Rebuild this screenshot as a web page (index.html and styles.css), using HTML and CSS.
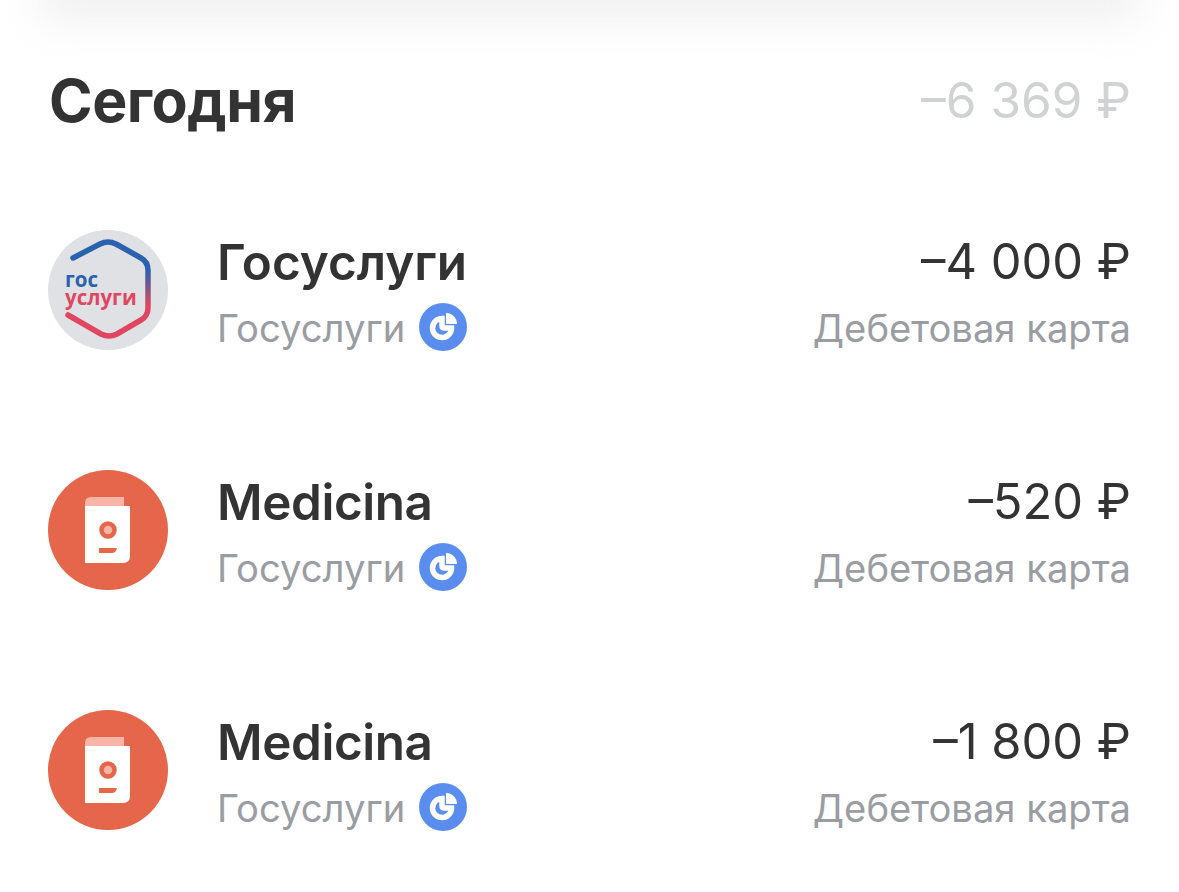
FILE: index.html
```html
<!DOCTYPE html>
<html lang="en">
<head>
    <meta charset="UTF-8">
    <title>Сегодня</title>
    <link rel="stylesheet" href="styles.css">
</head>
<body>
    <div class="shade"></div>
    <div class="day-header">
        <div class="day-title">Сегодня</div>
        <div class="day-total">–6 369 ₽</div>
    </div>
    <div class="list">
        <div class="row">
            <svg class="logo" viewBox="0 0 120 120">
                <defs>
                    <linearGradient id="hex" x1="0" y1="0" x2="0" y2="1">
                        <stop offset="0.3" stop-color="#2b62ad"/>
                        <stop offset="0.68" stop-color="#e0465f"/>
                    </linearGradient>
                </defs>
                <circle cx="60" cy="60" r="60" fill="#dfe1e5"/>
                <path d="M25 28 L52 14 Q60 10 68 14 L93 28 Q100 32 100 40 L100 78 Q100 86 93 90 L69 104 Q61 108 53 104 L20 85" fill="none" stroke="url(#hex)" stroke-width="5.5" stroke-linecap="round" stroke-linejoin="round"/>
                <text class="logo-text"><tspan x="17" y="56.5" class="logo-top">гос</tspan><tspan x="17" y="74.5" class="logo-bottom">услуги</tspan></text>
            </svg>
            <div class="info">
                <div class="name">Госуслуги</div>
                <div class="sub">Госуслуги
                    <svg class="pie" viewBox="0 0 48 48">
                        <circle cx="24" cy="24" r="24" fill="#5b8def"/>
                        <path d="M23 15.5 A9.5 9.5 0 1 0 32.5 25 L25.5 25 Q23 25 23 22.5 Z" fill="none" stroke="#fff" stroke-width="5.5"/>
                        <path d="M27 10 A11 11 0 0 1 38 21 L27 21 Z" fill="#fff"/>
                    </svg>
                </div>
            </div>
            <div class="amounts">
                <div class="amount">–4 000 ₽</div>
                <div class="sub">Дебетовая карта</div>
            </div>
        </div>
        <div class="row">
            <svg class="logo" viewBox="0 0 120 120">
                <circle cx="60" cy="60" r="60" fill="#e5664a"/>
                <path d="M37 33 Q37 27 43 27 L76 27 L76 36 L37 36 Z" fill="#f6b5a6"/>
                <path d="M37 36 L82 36 L82 86 Q82 93 75 93 L37 93 Z" fill="#fff"/>
                <circle cx="60" cy="60" r="6.5" fill="#f6b5a6" stroke="#e5664a" stroke-width="4.5"/>
                <path d="M51 78 L69 78 Q68 83 64 83 L51 83 Z" fill="#e5664a"/>
            </svg>
            <div class="info">
                <div class="name name-latin">Medicina</div>
                <div class="sub">Госуслуги
                    <svg class="pie" viewBox="0 0 48 48">
                        <circle cx="24" cy="24" r="24" fill="#5b8def"/>
                        <path d="M23 15.5 A9.5 9.5 0 1 0 32.5 25 L25.5 25 Q23 25 23 22.5 Z" fill="none" stroke="#fff" stroke-width="5.5"/>
                        <path d="M27 10 A11 11 0 0 1 38 21 L27 21 Z" fill="#fff"/>
                    </svg>
                </div>
            </div>
            <div class="amounts">
                <div class="amount">–520 ₽</div>
                <div class="sub">Дебетовая карта</div>
            </div>
        </div>
        <div class="row">
            <svg class="logo" viewBox="0 0 120 120">
                <circle cx="60" cy="60" r="60" fill="#e5664a"/>
                <path d="M37 33 Q37 27 43 27 L76 27 L76 36 L37 36 Z" fill="#f6b5a6"/>
                <path d="M37 36 L82 36 L82 86 Q82 93 75 93 L37 93 Z" fill="#fff"/>
                <circle cx="60" cy="60" r="6.5" fill="#f6b5a6" stroke="#e5664a" stroke-width="4.5"/>
                <path d="M51 78 L69 78 Q68 83 64 83 L51 83 Z" fill="#e5664a"/>
            </svg>
            <div class="info">
                <div class="name name-latin">Medicina</div>
                <div class="sub">Госуслуги
                    <svg class="pie" viewBox="0 0 48 48">
                        <circle cx="24" cy="24" r="24" fill="#5b8def"/>
                        <path d="M23 15.5 A9.5 9.5 0 1 0 32.5 25 L25.5 25 Q23 25 23 22.5 Z" fill="none" stroke="#fff" stroke-width="5.5"/>
                        <path d="M27 10 A11 11 0 0 1 38 21 L27 21 Z" fill="#fff"/>
                    </svg>
                </div>
            </div>
            <div class="amounts">
                <div class="amount">–1 800 ₽</div>
                <div class="sub">Дебетовая карта</div>
            </div>
        </div>
    </div>
</body>
</html>
```
FILE: styles.css
```css
body {
    margin: 0;
    background: #fff;
    font-family: Inter, "Liberation Sans", sans-serif;
    color: #333;
}

.shade {
    position: absolute;
    top: -30px;
    left: 40px;
    right: 40px;
    height: 50px;
    background: #f0f0f0;
    filter: blur(20px);
}

.day-header {
    display: flex;
    justify-content: space-between;
    align-items: center;
    height: 80px;
    padding: 60px 48px 0 49px;
}

.day-title {
    font-size: 59px;
    font-weight: 700;
    letter-spacing: -0.5px;
}

.day-total {
    font-size: 49.5px;
    color: #d0d2d4;
}

.list {
    display: flex;
    flex-direction: column;
    gap: 120px;
    padding: 90px 48px 40px 48px;
}

.row {
    display: flex;
    align-items: center;
    height: 120px;
}

.logo {
    width: 120px;
    height: 120px;
    flex: none;
    margin-right: 49px;
}

.logo-text {
    font: 700 20.5px "Open Sans", sans-serif;
}

.logo-top {
    fill: #2b62ad;
}

.logo-bottom {
    fill: #e0465f;
}

.info {
    flex: 1;
    padding-top: 2px;
}

.name,
.amount {
    font-size: 49.4px;
    line-height: 64px;
    font-weight: 600;
}

.name-latin {
    letter-spacing: -0.4px;
}

.amount {
    font-size: 48.8px;
    font-weight: 400;
}

.sub {
    display: flex;
    align-items: center;
    margin-top: 10px;
    font-size: 38.2px;
    line-height: 48px;
    color: #9a9da1;
    gap: 14px;
}

.pie {
    width: 48px;
    height: 48px;
    margin-top: -2px;
}

.amounts {
    display: flex;
    flex-direction: column;
    align-items: flex-end;
    padding-top: 2px;
}
```
